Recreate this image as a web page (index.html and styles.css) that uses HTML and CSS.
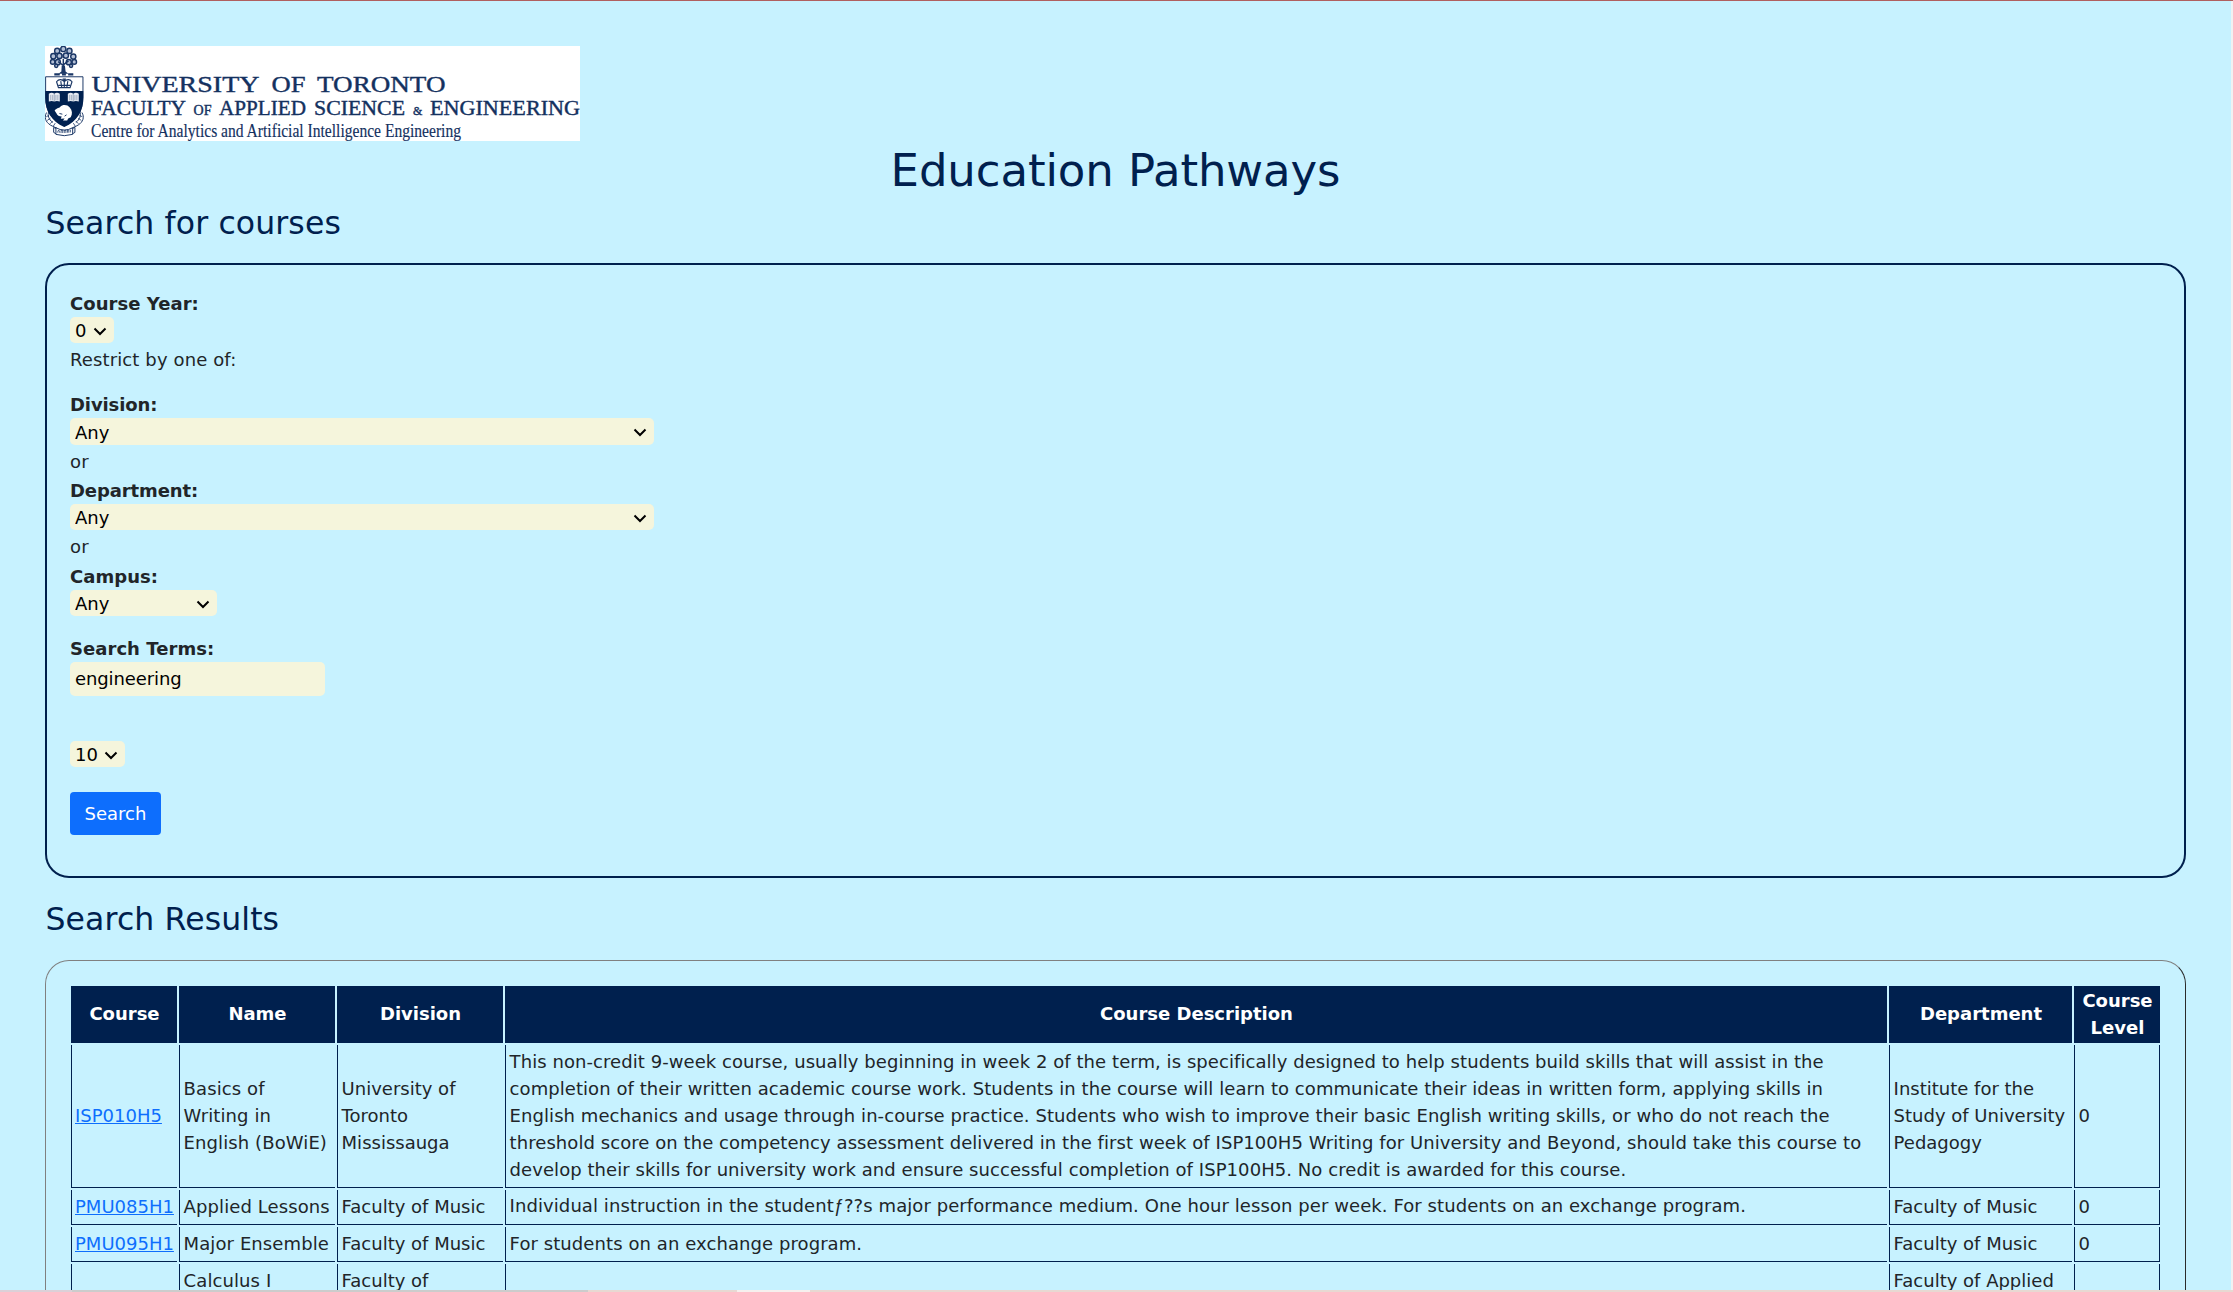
FILE: index.html
```html
<!DOCTYPE html>
<html lang="en">
<head>
<meta charset="utf-8">
<title>Education Pathways</title>
<link rel="stylesheet" href="styles.css">
</head>
<body>
<main class="page">
  <svg class="logo" viewBox="0 0 535 95" width="535" height="95" role="img" aria-label="University of Toronto">
    <g transform="translate(-1 -1) scale(.322 .331)" fill="none" stroke="#1b3766" stroke-width="3">
      <!-- oak tree -->
      <g stroke-width="4.5" fill="#b4c0d6">
        <circle cx="60" cy="12" r="8"/><circle cx="41" cy="18" r="8"/><circle cx="79" cy="18" r="8"/>
        <circle cx="29" cy="34" r="8"/><circle cx="48" cy="33" r="8"/><circle cx="68" cy="32" r="8"/><circle cx="91" cy="35" r="8"/>
        <circle cx="27" cy="51" r="7"/><circle cx="43" cy="52" r="8"/><circle cx="77" cy="52" r="8"/><circle cx="94" cy="51" r="7"/>
        <circle cx="38" cy="63" r="5"/><circle cx="84" cy="63" r="5"/>
        <path d="M60 42v42M60 62L44 50M60 60L76 48M60 28v12" fill="none"/>
      </g>
      <path d="M55 62h10l2 18 9 7H45l9-7z" fill="#1b3766" stroke="none"/>
      <path d="M32 89h17M56 89h12M75 89h16" stroke-width="7"/>
      <!-- side ribbons -->
      <path d="M8 204c-8 14-4 28 12 38 9 5 17 7 22 11M15 200c-5 13 0 25 12 34M118 204c8 14 4 28-12 38-9 5-17 7-22 11M111 200c5 13 0 25-12 34"/>
      <path d="M7 217l9-5M10 228l10-7M19 238l8-8M29 245l6-9M119 217l-9-5M116 228l-10-7M107 238l-8-8M97 245l-6-9" stroke-width="2.5"/>
      <!-- shield -->
      <path d="M5 96h116v61c0 42-19 69-58 88C24 226 5 199 5 157z" fill="#fff"/>
      <path d="M4 139h118v20c0 42-19 70-59 89C23 229 4 201 4 159z" fill="#002150" stroke="none"/>
      <!-- crown -->
      <path d="M45 129l-6-18c7-9 17-8 24 0 7-8 17-9 24 0l-6 18zM63 103v25M52 109l3 18M74 109l-3 18M45 122h36M58 103h10" stroke-width="3.5"/>
      <!-- books -->
      <path d="M15 147q9-5 17 0 8-5 17 0v24q-9-4-17 0-8-4-17 0zM74 147q9-5 17 0 8-5 17 0v24q-9-4-17 0-8-4-17 0z" fill="#e7ebf2" stroke="none"/>
      <path d="M32 148v22M91 148v22M21 151v16M27 151v16M37 151v16M43 151v16M80 151v16M86 151v16M96 151v16M102 151v16" stroke-width="1.6" opacity=".65"/>
      <!-- beaver -->
      <path d="M33 198c5-8 13-7 17-11 8-8 23-7 30 2 8 9 9 20 3 29l-8 4-3 6H59l5-6-12 1 3-7c-8 0-14-3-16-9z" fill="#fff" stroke="none"/>
      <path d="M48 207l9 2M64 215l6-4" stroke-width="3"/>
      <!-- motto scroll -->
      <path d="M37 250q26 14 52 0v20q-26 8-52 0zM37 252l-7-3v15l7 4M89 252l7-3v15l-7 4" fill="#fff"/>
      <path d="M43 265v-5l3-3 3 8M53 266v-8h5v8M63 266v-8h5v8M73 265v-8h4v8M82 264v-8" stroke-width="2.3"/>
    </g>
    <g fill="#14315f" stroke="#14315f" stroke-width=".4" font-family="'Liberation Serif', serif">
      <text x="46.5" y="46.3" font-size="24" textLength="168" lengthAdjust="spacingAndGlyphs">UNIVERSITY</text>
      <text x="226.500" y="46.3" font-size="24" textLength="34" lengthAdjust="spacingAndGlyphs">OF</text>
      <text x="272" y="46.3" font-size="24" textLength="128.500" lengthAdjust="spacingAndGlyphs">TORONTO</text>
      <text x="46" y="69" font-size="20.5" textLength="95" lengthAdjust="spacingAndGlyphs">FACULTY</text>
      <text x="148.500" y="69" font-size="14" textLength="18">OF</text>
      <text x="174" y="69" font-size="20.5" textLength="87" lengthAdjust="spacingAndGlyphs">APPLIED</text>
      <text x="269" y="69" font-size="20.5" textLength="91" lengthAdjust="spacingAndGlyphs">SCIENCE</text>
      <text x="368" y="69" font-size="12">&amp;</text>
      <text x="385" y="69" font-size="20.5" textLength="150" lengthAdjust="spacingAndGlyphs">ENGINEERING</text>
      <text x="46" y="91" font-size="18" stroke-width=".15" textLength="370" lengthAdjust="spacingAndGlyphs">Centre for Analytics and Artificial Intelligence Engineering</text>
    </g>
  </svg>

  <h1 class="title">Education Pathways</h1>
  <h2 class="heading">Search for courses</h2>

  <form class="panel">
    <label class="label" for="year">Course Year:</label>
    <select class="field select field-year" id="year"><option>0</option></select>
    <p class="note">Restrict by one of:</p>
    <label class="label label-division" for="division">Division:</label>
    <select class="field select field-division" id="division"><option>Any</option></select>
    <p class="note">or</p>
    <label class="label label-department" for="department">Department:</label>
    <select class="field select field-wide" id="department"><option>Any</option></select>
    <p class="note">or</p>
    <label class="label label-campus" for="campus">Campus:</label>
    <select class="field select field-campus" id="campus"><option>Any</option></select>
    <label class="label label-terms" for="terms">Search Terms:</label>
    <input class="field field-terms" id="terms" type="text" value="engineering">
    <select class="field select field-count" aria-label="Number of results"><option>10</option></select>
    <button class="button" type="button">Search</button>
  </form>

  <h2 class="heading heading-results">Search Results</h2>

  <section class="results">
    <table class="table">
      <colgroup><col class="c-course"><col class="c-name"><col class="c-division"><col class="c-desc"><col class="c-dept"><col class="c-level"></colgroup>
      <thead>
        <tr><th>Course</th><th>Name</th><th>Division</th><th>Course Description</th><th>Department</th><th>Course<br>Level</th></tr>
      </thead>
      <tbody>
        <tr class="row-tall">
          <td><a href="#">ISP010H5</a></td>
          <td>Basics of<br>Writing in<br>English (BoWiE)</td>
          <td>University of<br>Toronto<br>Mississauga</td>
          <td class="long">This non-credit 9-week course, usually beginning in week 2 of the term, is specifically designed to help students build skills that will assist in the<br>completion of their written academic course work. Students in the course will learn to communicate their ideas in written form, applying skills in<br>English mechanics and usage through in-course practice. Students who wish to improve their basic English writing skills, or who do not reach the<br>threshold score on the competency assessment delivered in the first week of ISP100H5 Writing for University and Beyond, should take this course to<br>develop their skills for university work and ensure successful completion of ISP100H5. No credit is awarded for this course.</td>
          <td>Institute for the<br>Study of University<br>Pedagogy</td>
          <td>0</td>
        </tr>
        <tr>
          <td><a href="#">PMU085H1</a></td><td>Applied Lessons</td><td>Faculty of Music</td>
          <td class="medium">Individual instruction in the student<span class="florin">ƒ</span>??s major performance medium. One hour lesson per week. For students on an exchange program.</td>
          <td>Faculty of Music</td><td>0</td>
        </tr>
        <tr>
          <td><a href="#">PMU095H1</a></td><td>Major Ensemble</td><td>Faculty of Music</td>
          <td class="medium">For students on an exchange program.</td>
          <td>Faculty of Music</td><td>0</td>
        </tr>
        <tr class="row-cut">
          <td></td><td>Calculus I</td><td>Faculty of</td><td></td><td>Faculty of Applied</td><td></td>
        </tr>
      </tbody>
    </table>
  </section>
</main>
<div class="edge-right"></div>
<div class="edge-bottom"></div>
</body>
</html>
```
FILE: styles.css
```css
* { box-sizing: border-box; }

body {
  margin: 0;
  height: 1292px;
  overflow: hidden;
  position: relative;
  border-top: 1px solid #b0605f;
  background: #c7f2ff;
  color: #212529;
  font: 18px/27px "DejaVu Sans", Verdana, sans-serif;
}

.page { padding: 45px 47px 0 45px; }

.logo { display: block; background: #fff; }

.title {
  margin: 3px 0 6px;
  color: #00204e;
  font-size: 45px;
  font-weight: 400;
  line-height: 54px;
  text-align: center;
  letter-spacing: -.1px;
}

.heading {
  margin: 0 0 21px;
  color: #00204e;
  font-size: 31.5px;
  font-weight: 400;
  line-height: 38px;
  letter-spacing: .12px;
  text-indent: .5px;
}
.heading-results { margin: 22px 0 22px; }

.panel {
  display: flex;
  flex-direction: column;
  align-items: flex-start;
  height: 615px;
  padding: 25px 23px 0;
  border: 2px solid #00204e;
  border-radius: 24px;
}

.label { font-weight: 700; letter-spacing: .05px; }
.label-division { margin-top: 18px; letter-spacing: -.1px; }
.label-department { margin-top: 2px; letter-spacing: -.1px; }
.label-campus { margin-top: 3px; }
.label-terms { margin-top: 19px; }

.note { margin: 3px 0 0; letter-spacing: .12px; }

.field {
  height: 26px;
  margin: 0;
  border: 0;
  border-radius: 5px;
  background-color: #f5f5dc;
  color: #000;
  font: inherit;
}
.select {
  appearance: none;
  padding: 0 0 0 5px;
  background-image: url("data:image/svg+xml,%3Csvg xmlns='http://www.w3.org/2000/svg' width='14' height='9'%3E%3Cpath d='M1.500 1.500L7 7L12.500 1.500' fill='none' stroke='black' stroke-width='2'/%3E%3C/svg%3E");
  background-repeat: no-repeat;
  background-position: right 7px top 10px;
}
.field-year { width: 44px; }
.field-division { width: 584px; height: 27px; padding-top: 1px; }
.field-wide { width: 584px; }
.field-campus { width: 147px; }
.field-terms { width: 255px; height: 34px; padding: 0 5px 1px; letter-spacing: -.1px; }
.field-count { width: 55px; margin-top: 45px; }

.button {
  width: 91px;
  height: 43px;
  margin-top: 25px;
  padding: 0;
  border: 0;
  border-radius: 4px;
  background: #0d6efd;
  color: #fff;
  font: inherit;
}

.results {
  height: 331px;
  padding: 23px 23px 0;
  overflow: hidden;
  border: 1px solid;
  border-color: #808080 #2b2b2b #2b2b2b #808080;
  border-bottom: 0;
  border-radius: 24px 24px 0 0;
}

.table {
  table-layout: fixed;
  width: 2093px;
  border-collapse: separate;
  border-spacing: 2px;
}
.c-course { width: 106px; }
.c-name { width: 156px; }
.c-division { width: 166px; }
.c-desc { width: 1382px; }
.c-dept { width: 183px; }
.c-level { width: 86px; }

th {
  height: 57px;
  padding: 0 0 2px 1px;
  background: #00204e;
  color: #fff;
  font-weight: 700;
}
td {
  height: 35px;
  padding: 0 0 2px 3.6px;
  border: 0 solid #00204e;
  border-width: 0 0 1px 1px;
  white-space: nowrap;
}
td:first-child { padding-left: 3px; }
td:last-child { border-right-width: 1px; }
td a { color: #0d6efd; }
td:nth-child(2) { letter-spacing: .1px; }
.long { letter-spacing: .065px; }
.medium { letter-spacing: .08px; }
.florin { font-family: "Liberation Sans", sans-serif; }
.row-tall td { height: 143px; }
.row-cut td { height: 62px; padding-top: 3px; vertical-align: top; }

.edge-right {
  position: absolute;
  top: 0;
  right: 0;
  width: 2px;
  height: 1291px;
  background: #f1f1f1;
}
.edge-bottom {
  position: absolute;
  left: 0;
  bottom: 0;
  width: 100%;
  height: 2px;
  background: linear-gradient(90deg, #dcd0d8 72px, #cccccc 72px 588px, #e8d8d2 588px 737px, #f6f0ee 737px 810px, #e8d8d2 810px);
}
```
